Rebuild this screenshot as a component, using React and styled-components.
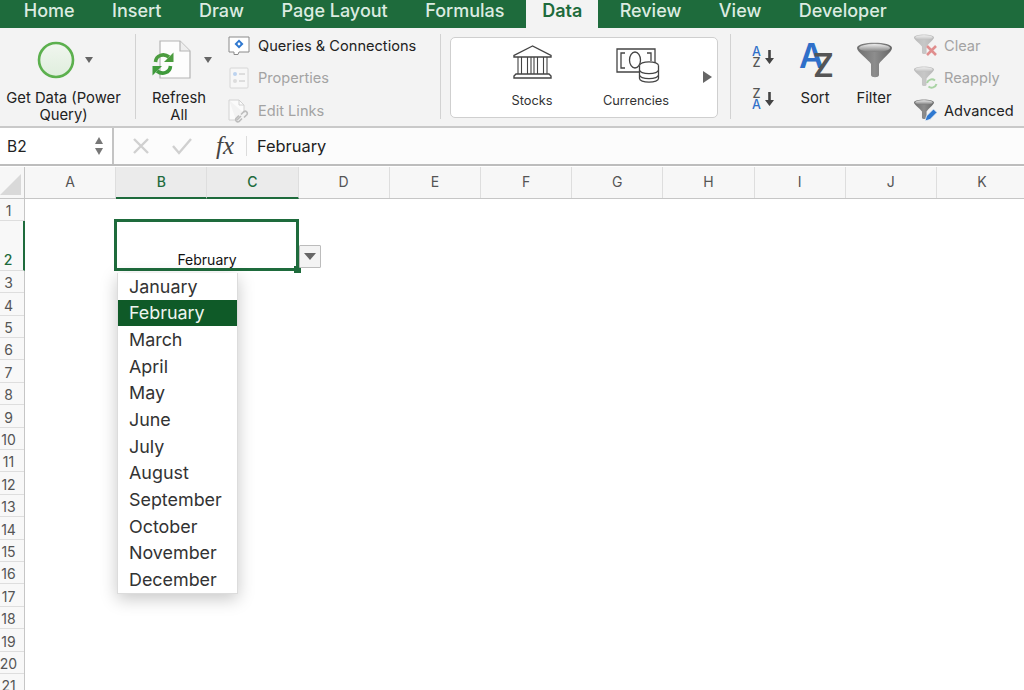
import React from 'react'
import styled, { createGlobalStyle } from 'styled-components'

const GREEN = '#1e6b3c'
const SANS = 'Inter, "Liberation Sans", sans-serif'

const Global = createGlobalStyle`
    html, body { margin: 0; padding: 0; background: #fff; }
    body { font-family: ${SANS}; overflow: hidden; }
    * { box-sizing: border-box; }
`

const Page = styled.div`
    width: 1024px;
    height: 690px;
    overflow: hidden;
    display: flex;
    flex-direction: column;
`

/* tabs */
const Tabs = styled.div`
    display: flex;
    height: 28px;
    padding-left: 5px;
    background: ${GREEN};
`
const Tab = styled.div`
    padding: 0 ${({ $active }) => ($active ? 16 : 18.75)}px;
    margin: 0 ${({ $active }) => ($active ? '2.5px 0 3px' : '0')};
    font-size: 18px;
    line-height: 21px;
    white-space: nowrap;
    color: ${({ $active }) => ($active ? GREEN : '#dcebe1')};
    font-weight: ${({ $active }) => ($active ? 600 : 500)};
    background: ${({ $active }) => ($active ? '#f3f3f3' : 'transparent')};
`

/* ribbon */
const Ribbon = styled.div`
    display: flex;
    height: 100px;
    background: #f3f3f3;
    border-bottom: 2px solid #c9c9c9;
`
const Sep = styled.div`
    width: 1px;
    margin: 6px 0 7px;
    background: #d2d2d2;
    margin-left: ${({ $left }) => $left || 0}px;
`
const BigButton = styled.div`
    width: ${({ $width }) => $width}px;
    margin-left: ${({ $left }) => $left || 0}px;
    padding-top: 8px;
    display: flex;
    flex-direction: column;
`
const IconArea = styled.div`
    height: 48px;
    display: flex;
    align-items: center;
    gap: ${({ $gap }) => $gap || 0}px;
    padding-left: ${({ $pad }) => $pad || 0}px;
`
const BigLabel = styled.div`
    margin-top: 6px;
    font-size: 14.8px;
    line-height: 17px;
    text-align: center;
    white-space: nowrap;
    color: #222;
`
const Caret = styled.div`
    width: 0;
    height: 0;
    border-left: 4px solid transparent;
    border-right: 4px solid transparent;
    border-top: 6px solid #666;
`
const SmallList = styled.div`
    margin-left: ${({ $left }) => $left || 0}px;
    width: ${({ $width }) => $width}px;
    padding-top: 1.5px;
`
const SmallRow = styled.div`
    height: 32.5px;
    display: flex;
    align-items: center;
    gap: ${({ $gap }) => $gap || 6}px;
    font-size: 14.6px;
    white-space: nowrap;
    color: ${({ $off }) => ($off ? '#a3a3a3' : '#222')};
`
const Gallery = styled.div`
    width: 268px;
    height: 81px;
    margin: 9px 0 0 9px;
    display: flex;
    background: #fff;
    border: 1px solid #cfcfcf;
    border-radius: 5px;
`
const GalleryItem = styled.div`
    width: ${({ $width }) => $width}px;
    margin-left: ${({ $left }) => $left || 0}px;
    padding-top: 7px;
    display: flex;
    flex-direction: column;
    align-items: center;
`
const GalleryIcon = styled.div`
    height: 38px;
    display: flex;
    align-items: ${({ $low }) => ($low ? 'flex-end' : 'flex-start')};
    padding-left: ${({ $shift }) => $shift || 0}px;
`
const GalleryLabel = styled.div`
    margin-top: 9.5px;
    font-size: 12.8px;
    line-height: 15px;
    color: #333;
`
const GalleryArrow = styled.div`
    margin: 33px 0 0 22px;
    width: 0;
    height: 0;
    border-top: 6px solid transparent;
    border-bottom: 6px solid transparent;
    border-left: 9px solid #666;
`
const SortCol = styled.div`
    width: 24px;
    margin-left: 21px;
    padding-top: 18px;
    display: flex;
    flex-direction: column;
    gap: 19.5px;
`
const SortPair = styled.div`
    display: flex;
    align-items: center;
    gap: 4px;
    height: 22px;
`
const Letters = styled.div`
    width: 9px;
    display: flex;
    flex-direction: column;
    align-items: center;
    font-size: 12.5px;
    font-weight: 500;
    line-height: 11px;
`
const Letter = styled.span`
    color: ${({ $blue }) => ($blue ? '#2f6fc9' : '#555')};
`

/* formula bar */
const FormulaBar = styled.div`
    display: flex;
    align-items: center;
    height: 38px;
    background: #fcfcfc;
    border-bottom: 2px solid #bdbdbd;
`
const NameBox = styled.div`
    width: 114px;
    height: 100%;
    padding: 0 9px 0 7px;
    display: flex;
    align-items: center;
    justify-content: space-between;
    background: #fff;
    border-right: 2px solid #c4c4c4;
    font-size: 15.5px;
    color: #222;
`
const Stepper = styled.div`
    display: flex;
    flex-direction: column;
    gap: 4px;
`
const StepArrow = styled.div`
    width: 0;
    height: 0;
    border-left: 4.5px solid transparent;
    border-right: 4.5px solid transparent;
    border-${({ $down }) => ($down ? 'top' : 'bottom')}: 7px solid #777;
`
const BarTools = styled.div`
    width: 132px;
    height: 100%;
    display: flex;
    align-items: center;
    padding-left: 18px;
    gap: 21px;
`
const Fx = styled.span`
    margin-left: 2px;
    font-family: "Liberation Serif", serif;
    font-style: italic;
    font-size: 25px;
    line-height: 24px;
    color: #444;
`
const BarDivider = styled.div`
    width: 1px;
    height: 20px;
    background: #dcdcdc;
`
const BarText = styled.div`
    margin-left: 10px;
    font-size: 16.4px;
    color: #222;
`

/* sheet */
const HeaderRow = styled.div`
    display: flex;
    height: 32px;
    margin-top: 1px;
    background: #f7f7f7;
    border-bottom: 1px solid #c6c6c6;
`
const Corner = styled.div`
    width: 25px;
    flex: none;
    border-right: 1px solid #c6c6c6;
    display: flex;
    align-items: flex-end;
    padding: 0 0 3px 0;
`
const ColHead = styled.div`
    width: 91.2px;
    flex: none;
    display: flex;
    align-items: center;
    justify-content: center;
    padding-bottom: 2px;
    font-size: 14px;
    color: ${({ $on }) => ($on ? GREEN : '#555')};
    font-weight: ${({ $on }) => ($on ? 500 : 400)};
    background: ${({ $on }) => ($on ? '#ebebeb' : 'transparent')};
    border-right: 1px solid #dedede;
    border-bottom: ${({ $on }) => ($on ? `2px solid ${GREEN}` : 'none')};
    height: ${({ $on }) => ($on ? 32 : 31)}px;
`
const Sheet = styled.div`
    flex: 1;
    display: flex;
    position: relative;
    overflow: hidden;
`
const RowHeads = styled.div`
    width: 25px;
    background: #f8f8f8;
    border-right: 1px solid #c6c6c6;
`
const RowHead = styled.div`
    height: ${({ $tall }) => ($tall ? 49.5 : 22.4)}px;
    width: ${({ $on }) => ($on ? 25 : 24)}px;
    display: flex;
    align-items: flex-end;
    justify-content: center;
    padding: 0 7px ${({ $tall }) => ($tall ? 1 : 0)}px 0;
    font-size: 14px;
    line-height: 19px;
    color: ${({ $on }) => ($on ? GREEN : '#555')};
    font-weight: ${({ $on }) => ($on ? 500 : 400)};
    border-bottom: 1px solid #dedede;
    border-right: ${({ $on }) => ($on ? `2.5px solid ${GREEN}` : 'none')};
`
const Selection = styled.div`
    position: absolute;
    left: 114px;
    top: 20px;
    width: 185px;
    height: 52px;
    padding-left: 1px;
    display: flex;
    align-items: flex-end;
    justify-content: center;
    border: 3px solid ${GREEN};
    font-size: 14px;
    line-height: 16px;
    color: #111;
`
const Handle = styled.div`
    position: absolute;
    right: -5px;
    bottom: -5px;
    width: 7px;
    height: 7px;
    background: ${GREEN};
`
const DropButton = styled.div`
    position: absolute;
    left: 299px;
    top: 46px;
    width: 22px;
    height: 23px;
    display: flex;
    align-items: center;
    justify-content: center;
    background: #f3f3f3;
    border: 1px solid #bcbcbc;
    border-radius: 1px;
`
const DropCaret = styled.div`
    width: 0;
    height: 0;
    border-left: 6px solid transparent;
    border-right: 6px solid transparent;
    border-top: 7px solid #666;
`
const Menu = styled.div`
    position: absolute;
    left: 117px;
    top: 74px;
    width: 121px;
    background: #fff;
    border: 1px solid #dcdcdc;
    border-top: none;
    box-shadow: 0 5px 16px rgba(0, 0, 0, 0.22);
`
const MenuItem = styled.div`
    height: 26.67px;
    padding-left: 11px;
    display: flex;
    align-items: center;
    font-size: 17.9px;
    color: ${({ $on }) => ($on ? '#eef5ef' : '#333')};
    background: ${({ $on }) => ($on ? '#0f5a28' : 'transparent')};
`

/* icons */
const CircleIcon = () => (
    <svg width="38" height="38" viewBox="0 0 38 38">
        <defs>
            <linearGradient id="cg" x1="0" y1="0" x2="0" y2="1">
                <stop offset="0" stopColor="#f1f6ef" />
                <stop offset="1" stopColor="#dfeedd" />
            </linearGradient>
        </defs>
        <circle cx="19" cy="19" r="17" fill="url(#cg)" stroke="#5cb04e" strokeWidth="2.6" />
    </svg>
)

const RefreshIcon = () => (
    <svg width="40" height="40" viewBox="0 0 40 40">
        <path d="M8 1h20l10 10v27H8z" fill="#fdfdfd" stroke="#b5b5b5" strokeWidth="1.2" />
        <path d="M28 1v10h10" fill="#eeeeee" stroke="#b5b5b5" strokeWidth="1.2" />
        <path d="M3.5 22C4 15 12 13 17 17" fill="none" stroke="#4c9c3f" strokeWidth="3.6" />
        <path d="M21.5 12.5v9.5H12z" fill="#4c9c3f" />
        <path d="M18.5 26C18 33 10 35 5 31" fill="none" stroke="#3f9a3c" strokeWidth="3.6" />
        <path d="M.5 35.5V26H10z" fill="#3f9a3c" />
    </svg>
)

const PanelIcon = () => (
    <svg width="22" height="20" viewBox="0 0 22 20">
        <path d="M1 1h20v15H11l-1 2.5H6V16H1z" fill="#fff" stroke="#8a8a8a" />
        <path d="M11 3.5l4.5 4.5-4.5 4.5-4.5-4.5z" fill="#2f78d0" />
        <circle cx="11" cy="8" r="1.4" fill="#fff" />
    </svg>
)

const PropsIcon = () => (
    <svg width="22" height="22" viewBox="0 0 22 22">
        <rect x="2" y="1" width="18" height="20" rx="1" fill="#f7f7f7" stroke="#d6d6d6" />
        <circle cx="7" cy="7" r="2" fill="#bcd3ef" />
        <path d="M11 7h6" stroke="#c4c4c4" />
        <circle cx="7" cy="14" r="2" fill="#dcdcdc" />
        <path d="M11 14h6" stroke="#c4c4c4" />
    </svg>
)

const LinksIcon = () => (
    <svg width="22" height="24" viewBox="0 0 22 24">
        <path d="M1 1h10l5 5v8M8 21H1V1" fill="#fbfbfb" stroke="#d2d2d2" />
        <path d="M11 1v5h5" fill="none" stroke="#d2d2d2" />
        <path d="M9 21l4-4M14 19.5l-3 3a2.2 2.2 0 0 1-3-3l3-3M13 15.5l3-3a2.2 2.2 0 0 1 3 3l-3 3" fill="none" stroke="#bdbdbd" strokeWidth="1.6" />
    </svg>
)

const BankIcon = () => (
    <svg width="39" height="34" viewBox="0 0 39 34" fill="none" stroke="#444" strokeWidth="1.4">
        <path d="M19.5 1L1 10.5V12h37v-1.5z" />
        <path d="M5 12v17M8.5 12v17M14.5 12v17M18 12v17M21 12v17M24.5 12v17M30.5 12v17M34 12v17" strokeWidth="1.1" />
        <path d="M4 29h31M1 33v-2l2-2h33l2 2v2z" />
    </svg>
)

const MoneyIcon = () => (
    <svg width="44" height="35" viewBox="0 0 44 35" fill="none" stroke="#444" strokeWidth="1.3">
        <path d="M23 24H1V1h38v14" />
        <path d="M9 5H5v15h4M31 5h4v8" />
        <ellipse cx="19" cy="12" rx="5.5" ry="8" />
        <ellipse cx="33" cy="17.5" rx="9.5" ry="3.6" fill="#fff" />
        <path d="M23.5 17.5v13c0 2 4 3.6 9.5 3.6s9.5-1.6 9.5-3.6v-13" fill="#fff" />
        <path d="M23.5 22c0 2 4 3.6 9.5 3.6s9.5-1.6 9.5-3.6M23.5 27c0 2 4 3.6 9.5 3.6s9.5-1.6 9.5-3.6" />
    </svg>
)

const DownArrow = () => (
    <svg width="9" height="14" viewBox="0 0 9 14">
        <path d="M3.2 0h2.6v8H9l-4.5 6L0 8h3.2z" fill="#444" />
    </svg>
)

const BigAZ = () => (
    <svg width="36" height="37" viewBox="0 0 36 37" overflow="visible">
        <text x="0" y="26" fontFamily="Inter, sans-serif" fontWeight="600" fontSize="34" fill="#2f6fc9">A</text>
        <text x="14" y="35" fontFamily="Inter, sans-serif" fontWeight="600" fontSize="32" fill="#555">Z</text>
    </svg>
)

const FunnelShape = ({ id }) => (
    <>
        <defs>
            <linearGradient id={id} x1="0" y1="0" x2="0" y2="1">
                <stop offset="0" stopColor="#eeeeee" />
                <stop offset="1" stopColor="#7c7c7c" />
            </linearGradient>
            <linearGradient id={`${id}b`} x1="0" y1="0" x2="1" y2="0">
                <stop offset="0" stopColor="#6f6f6f" />
                <stop offset="0.5" stopColor="#8d8d8d" />
                <stop offset="1" stopColor="#666666" />
            </linearGradient>
        </defs>
        <path d="M0 6c0-7 35-7 35 0 0 4-11 12-13 16v11c0 3-8 3-8 0V22C12 18 0 10 0 6z" fill={`url(#${id}b)`} />
        <ellipse cx="17.5" cy="6" rx="15.5" ry="4" fill={`url(#${id})`} />
    </>
)

const Funnel = () => (
    <svg width="35" height="36" viewBox="0 0 35 36">
        <FunnelShape id="fg" />
    </svg>
)

const SmallFunnel = ({ id, faded }) => (
    <g opacity={faded ? 0.42 : 1} transform="scale(.57)">
        <FunnelShape id={id} />
    </g>
)

const ClearIcon = () => (
    <svg width="24" height="24" viewBox="0 0 24 24">
        <SmallFunnel id="f1" faded />
        <path d="M13 12l9 9M22 12l-9 9" stroke="#e08e8e" strokeWidth="2.6" />
    </svg>
)

const ReapplyIcon = () => (
    <svg width="24" height="24" viewBox="0 0 24 24">
        <SmallFunnel id="f2" faded />
        <path d="M13 17a5 5 0 0 1 8-2.5M22.5 18a5 5 0 0 1-8 2.5" fill="none" stroke="#a9d3a4" strokeWidth="2" />
    </svg>
)

const AdvancedIcon = () => (
    <svg width="24" height="24" viewBox="0 0 24 24">
        <SmallFunnel id="f3" />
        <path d="M11 22l1.5-5 7-7 3.5 3.5-7 7z" fill="#2f78d0" stroke="#f3f3f3" strokeWidth="0.8" />
    </svg>
)

const CrossIcon = () => (
    <svg width="18" height="20" viewBox="0 0 18 20">
        <path d="M2 3l14 14M16 3L2 17" stroke="#d0d0d0" strokeWidth="2.4" />
    </svg>
)

const CheckIcon = () => (
    <svg width="22" height="20" viewBox="0 0 22 20">
        <path d="M2 10l6 7L20 3" fill="none" stroke="#d0d0d0" strokeWidth="2.4" />
    </svg>
)

const CornerIcon = () => (
    <svg width="22" height="22" viewBox="0 0 22 22">
        <path d="M21 1v21H0z" fill="#d9d9d9" />
    </svg>
)

const tabs = ['Home', 'Insert', 'Draw', 'Page Layout', 'Formulas']
const columns = ['A', 'B', 'C', 'D', 'E', 'F', 'G', 'H', 'I', 'J', 'K']
const rows = Array.from({ length: 21 }, (_, i) => i + 1)
const months = ['January', 'February', 'March', 'April', 'May', 'June', 'July', 'August', 'September', 'October', 'November', 'December']

const App = () => {
    return <Page>
        <Global />
        <Tabs>
            {tabs.map(name => <Tab key={name}>{name}</Tab>)}
            <Tab $active>Data</Tab>
            <Tab>Review</Tab>
            <Tab>View</Tab>
            <Tab>Developer</Tab>
        </Tabs>
        <Ribbon>
            <BigButton $width={127}>
                <IconArea $pad={37} $gap={10}>
                    <CircleIcon />
                    <Caret />
                </IconArea>
                <BigLabel>Get Data (Power<br />Query)</BigLabel>
            </BigButton>
            <Sep $left={8} />
            <BigButton $width={70} $left={8}>
                <IconArea $pad={8} $gap={12}>
                    <RefreshIcon />
                    <Caret />
                </IconArea>
                <BigLabel>Refresh<br />All</BigLabel>
            </BigButton>
            <SmallList $left={14} $width={212}>
                <SmallRow $gap={8}><PanelIcon />Queries &amp; Connections</SmallRow>
                <SmallRow $off $gap={8}><PropsIcon />Properties</SmallRow>
                <SmallRow $off $gap={8}><LinksIcon />Edit Links</SmallRow>
            </SmallList>
            <Sep />
            <Gallery>
                <GalleryItem $width={90} $left={36}>
                    <GalleryIcon><BankIcon /></GalleryIcon>
                    <GalleryLabel>Stocks</GalleryLabel>
                </GalleryItem>
                <GalleryItem $width={90} $left={14}>
                    <GalleryIcon $low $shift={4}><MoneyIcon /></GalleryIcon>
                    <GalleryLabel>Currencies</GalleryLabel>
                </GalleryItem>
                <GalleryArrow />
            </Gallery>
            <Sep $left={12} />
            <SortCol>
                <SortPair>
                    <Letters><Letter $blue>A</Letter><Letter>Z</Letter></Letters>
                    <DownArrow />
                </SortPair>
                <SortPair>
                    <Letters><Letter>Z</Letter><Letter $blue>A</Letter></Letters>
                    <DownArrow />
                </SortPair>
            </SortCol>
            <BigButton $width={46} $left={16}>
                <IconArea $pad={7}><BigAZ /></IconArea>
                <BigLabel>Sort</BigLabel>
            </BigButton>
            <BigButton $width={52} $left={10}>
                <IconArea $pad={9}><Funnel /></IconArea>
                <BigLabel>Filter</BigLabel>
            </BigButton>
            <SmallList $left={14} $width={109}>
                <SmallRow $off><ClearIcon />Clear</SmallRow>
                <SmallRow $off><ReapplyIcon />Reapply</SmallRow>
                <SmallRow><AdvancedIcon />Advanced</SmallRow>
            </SmallList>
        </Ribbon>
        <FormulaBar>
            <NameBox>
                B2
                <Stepper><StepArrow /><StepArrow $down /></Stepper>
            </NameBox>
            <BarTools>
                <CrossIcon />
                <CheckIcon />
                <Fx>fx</Fx>
            </BarTools>
            <BarDivider />
            <BarText>February</BarText>
        </FormulaBar>
        <HeaderRow>
            <Corner><CornerIcon /></Corner>
            {columns.map(c => <ColHead key={c} $on={c === 'B' || c === 'C'}>{c}</ColHead>)}
        </HeaderRow>
        <Sheet>
            <RowHeads>
                {rows.map(r => <RowHead key={r} $tall={r === 2} $on={r === 2}>{r}</RowHead>)}
            </RowHeads>
            <Selection>
                February
                <Handle />
            </Selection>
            <DropButton><DropCaret /></DropButton>
            <Menu>
                {months.map(m => <MenuItem key={m} $on={m === 'February'}>{m}</MenuItem>)}
            </Menu>
        </Sheet>
    </Page>
}

export default App
